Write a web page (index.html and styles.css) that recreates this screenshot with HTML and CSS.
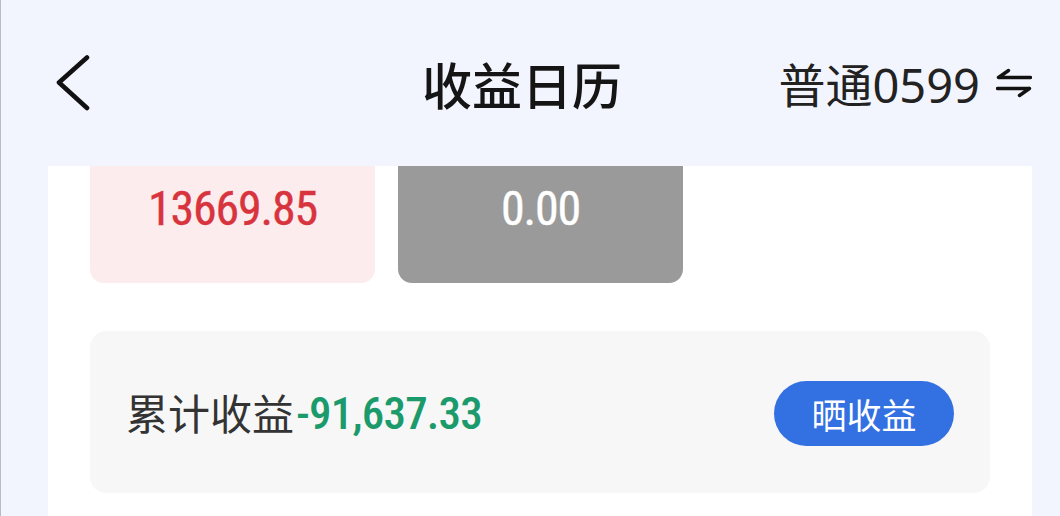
FILE: index.html
```html
<!DOCTYPE html>
<html lang="zh-CN">
<head>
<meta charset="utf-8">
<title>收益日历</title>
<link rel="stylesheet" href="styles.css">
</head>
<body>
<header class="header">
  <div class="header-left">
    <svg class="back" width="40" height="60" viewBox="0 0 40 60">
      <polyline points="31,4.5 3,29.5 31,55" fill="none" stroke="#111" stroke-width="4.6" stroke-linecap="round" stroke-linejoin="round"/>
    </svg>
  </div>
  <h1 class="title">收益日历</h1>
  <div class="header-right">
    <span class="account">普通0599</span>
    <svg class="swap" width="36" height="30" viewBox="0 0 36 30">
      <path d="M2.5 9.5 H34.5 M2.5 9.5 L12.5 2.5" fill="none" stroke="#111" stroke-width="3.4" stroke-linecap="round" stroke-linejoin="round"/>
      <path d="M1.5 20.5 H33.5 M33.5 20.5 L23.5 27.5" fill="none" stroke="#111" stroke-width="3.4" stroke-linecap="round" stroke-linejoin="round"/>
    </svg>
  </div>
</header>
<main class="panel">
  <div class="cards">
    <div class="card card-profit"><span class="num">13669.85</span></div>
    <div class="card card-zero"><span class="num">0.00</span></div>
  </div>
  <div class="total">
    <div class="total-text">
      <span class="total-label">累计收益</span><span class="total-value">-91,637.33</span>
    </div>
    <button class="share">晒收益</button>
  </div>
</main>
</body>
</html>
```

FILE: styles.css
```css
html, body {
  margin: 0;
  padding: 0;
}
body {
  width: 1060px;
  height: 516px;
  overflow: hidden;
  background: #f2f5fd;
  box-shadow: inset 1px 0 0 #b9bbc0;
  font-family: "Noto Sans", "Noto Sans CJK SC", sans-serif;
  color: #222;
}
.header {
  height: 166px;
  display: grid;
  grid-template-columns: 1fr auto 1fr;
  align-items: center;
  padding: 0 28px 0 30px;
  box-sizing: border-box;
}
.header-left {
  display: flex;
  align-items: center;
}
.back {
  display: block;
  margin-left: 26px;
}
.title {
  margin: 0 18px 0 0;
  font-size: 50px;
  font-weight: 500;
  line-height: 1;
  color: #151515;
  font-family: "Noto Sans CJK SC", sans-serif;
}
.header-right {
  display: flex;
  justify-content: flex-end;
  align-items: center;
  gap: 16px;
}
.account {
  font-size: 47px;
  line-height: 1;
  color: #222;
  position: relative;
  top: 2px;
}
.swap {
  display: block;
}
.panel {
  background: #fff;
  margin: 0 28px 0 48px;
  padding: 0 42px;
  height: 350px;
}
.cards {
  display: flex;
  gap: 23px;
}
.card {
  width: 285px;
  height: 117px;
  box-sizing: border-box;
  border-radius: 0 0 14px 14px;
  display: flex;
  justify-content: center;
  padding-top: 19px;
}
.num {
  font-family: "Roboto", sans-serif;
  font-stretch: 75%;
  font-weight: 400;
  font-size: 48px;
  letter-spacing: -1.2px;
  line-height: 1;
  -webkit-text-stroke: 0.4px currentColor;
}
.card-profit {
  background: #fdecee;
  color: #d8343d;
}
.card-zero {
  background: #9a9a9a;
  color: #fff;
}
.total {
  margin-top: 48px;
  height: 162px;
  background: #f7f7f7;
  border-radius: 16px;
  display: flex;
  align-items: center;
  justify-content: space-between;
  padding: 0 36px 0 36px;
  box-sizing: border-box;
}
.total-text {
  display: flex;
  align-items: center;
}
.total-label {
  font-family: "Noto Sans CJK SC", sans-serif;
  font-size: 42px;
  color: #333;
  line-height: 1;
}
.total-value {
  font-family: "Roboto", sans-serif;
  font-stretch: 75%;
  font-size: 45px;
  font-weight: 500;
  letter-spacing: -0.8px;
  color: #1b9a6c;
  line-height: 1;
  margin-left: 2px;
  position: relative;
  top: 1px;
}
.share {
  width: 180px;
  height: 65px;
  border: none;
  border-radius: 33px;
  background: #3370e2;
  color: #fff;
  font-family: "Noto Sans CJK SC", sans-serif;
  font-size: 35px;
  line-height: 1;
  padding: 0;
  margin-top: 2px;
}
```
